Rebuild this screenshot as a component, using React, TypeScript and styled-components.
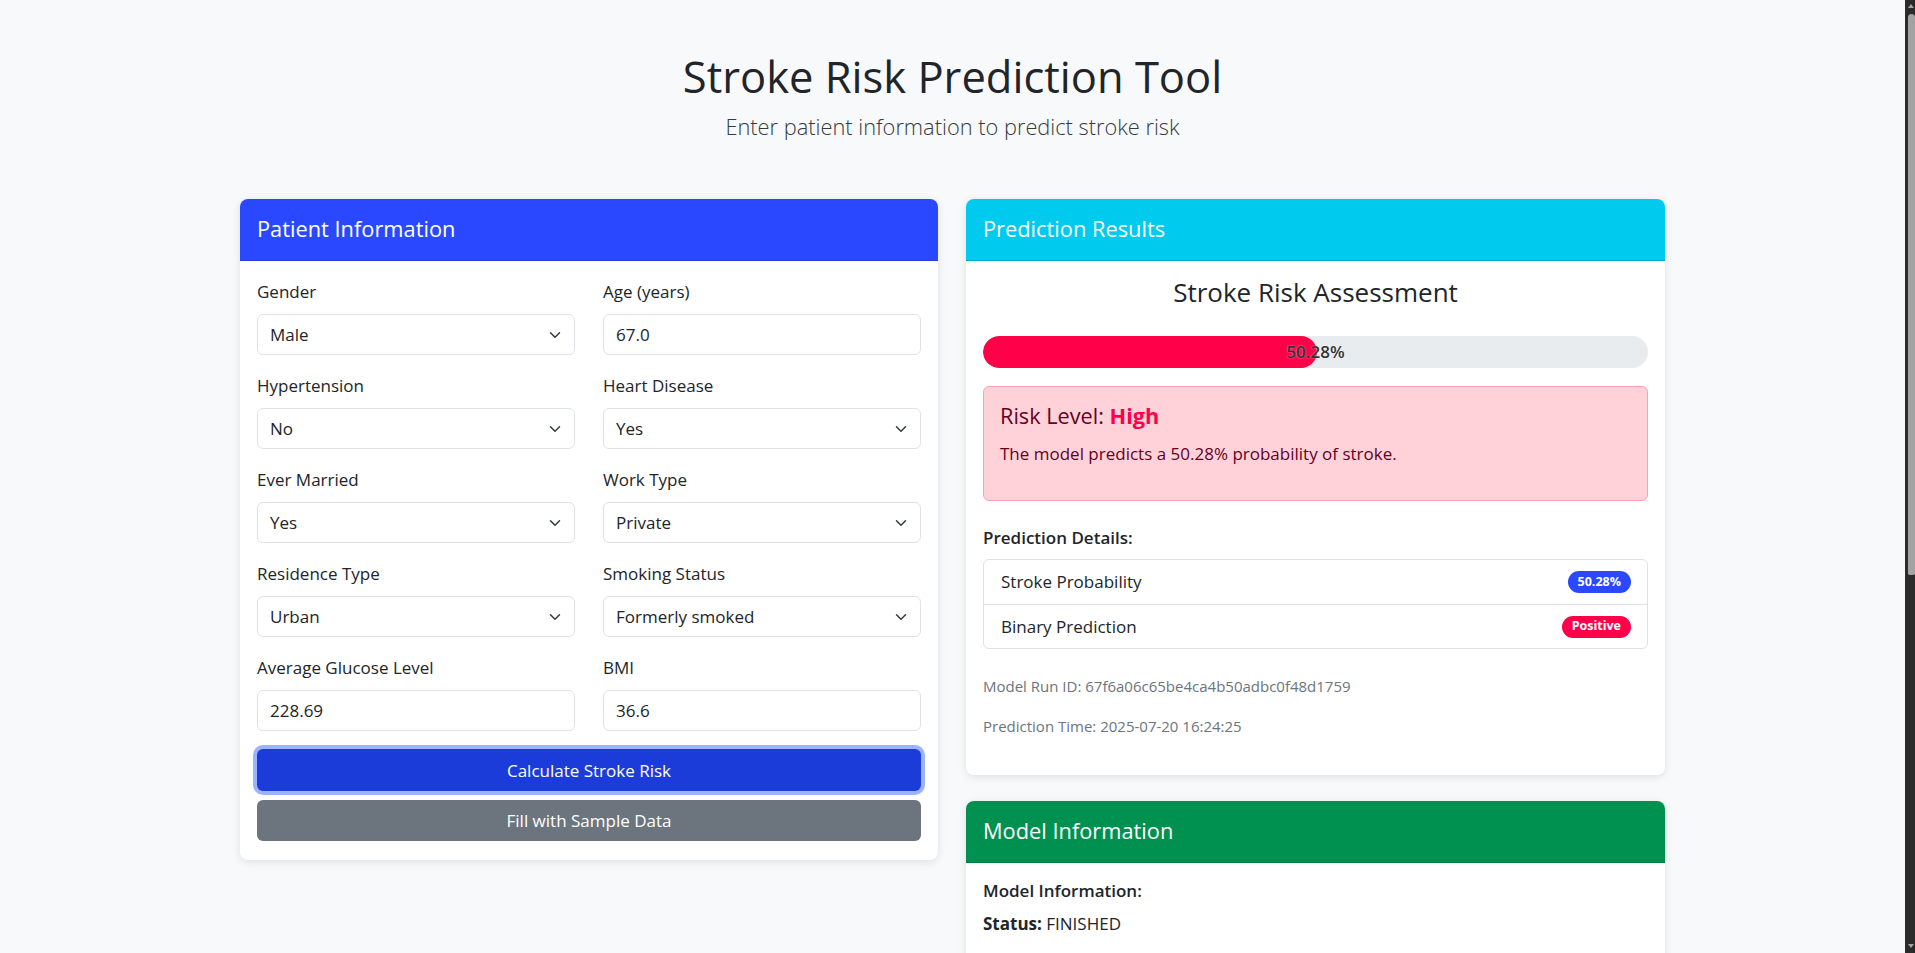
import React from "react";
import styled, { createGlobalStyle } from "styled-components";

const FONT = `"Open Sans", "Noto Sans", "Liberation Sans", sans-serif`;

const GlobalStyle = createGlobalStyle`
  html, body {
    margin: 0;
    padding: 0;
    background: #f8f9fa;
  }
  body {
    font-family: ${FONT};
    font-size: 17px;
    line-height: 1.5;
    color: #212529;
  }
  *, *::before, *::after { box-sizing: border-box; }
`;

const Page = styled.div`
  min-height: 1568px;
  padding: 43px 10px 40px 0;
`;

const Hero = styled.header`
  text-align: center;
  margin-bottom: 57px;
`;

const Title = styled.h1`
  margin: 0 0 2px;
  font-size: 43.5px;
  font-weight: 400;
  line-height: 67px;
  color: #212529;
`;

const Subtitle = styled.p`
  margin: 0;
  font-size: 21.8px;
  font-weight: 300;
  line-height: 30px;
  color: #343a40;
`;

const Layout = styled.main`
  width: 1425px;
  margin: 0 auto;
  display: grid;
  grid-template-columns: 698px 699px;
  column-gap: 28px;
  align-items: start;
`;

const Column = styled.div`
  display: flex;
  flex-direction: column;
  gap: 26px;
`;

const Card = styled.section`
  background: #fff;
  border-radius: 8px;
  overflow: hidden;
  box-shadow: 0 2px 8px rgba(0, 0, 0, 0.1);
`;

const CardHeader = styled.div<{ $bg: string }>`
  height: 62px;
  padding: 0 17px;
  display: flex;
  align-items: center;
  background: ${(p) => p.$bg};
  border-bottom: 1px solid rgba(0, 0, 0, 0.15);
`;

const CardTitle = styled.h4`
  margin: 0 0 1px;
  font-size: 21.8px;
  font-weight: 400;
  line-height: 1.2;
  color: #fff;
`;

const CardBody = styled.div<{ $pt?: number; $pb?: number }>`
  padding: ${(p) => p.$pt ?? 20}px 17px ${(p) => p.$pb ?? 19}px;
`;

const FormGrid = styled.div`
  display: grid;
  grid-template-columns: 1fr 1fr;
  column-gap: 28px;
  row-gap: 20px;
`;

const Field = styled.div`
  display: flex;
  flex-direction: column;
`;

const Label = styled.label`
  font-size: 17px;
  line-height: 22px;
  margin-bottom: 11px;
  color: #212529;
`;

const controlCss = `
  width: 100%;
  height: 41px;
  padding: 0 12px;
  font-family: ${FONT};
  font-size: 17px;
  color: #212529;
  background: #fff;
  border: 1px solid #dee2e6;
  border-radius: 6px;
  outline: none;
`;

const Input = styled.input`
  ${controlCss}
`;

const SelectWrap = styled.div`
  position: relative;
`;

const Select = styled.select`
  ${controlCss}
  appearance: none;
  -webkit-appearance: none;
  padding-right: 36px;
`;

const Chevron = styled.svg`
  position: absolute;
  right: 12px;
  top: 50%;
  width: 16px;
  height: 12px;
  margin-top: -6px;
  pointer-events: none;
`;

const Button = styled.button<{ $variant: "primary" | "secondary" }>`
  display: block;
  width: 100%;
  height: ${(p) => (p.$variant === "primary" ? "42px" : "41px")};
  border: 1px solid transparent;
  border-radius: 6px;
  font-family: ${FONT};
  font-size: 17px;
  color: #fff;
  cursor: pointer;
  background: ${(p) => (p.$variant === "primary" ? "#1c3cd9" : "#6c757d")};
  margin-top: ${(p) => (p.$variant === "primary" ? "18px" : "9px")};
  box-shadow: ${(p) =>
    p.$variant === "primary" ? "0 0 0 4px rgba(74, 118, 255, 0.55)" : "none"};
`;

const AssessTitle = styled.h4`
  margin: 0 0 29px;
  text-align: center;
  font-size: 26px;
  font-weight: 400;
  line-height: 29px;
`;

const Progress = styled.div`
  display: grid;
  height: 32px;
  border-radius: 16px;
  background: #e9ecef;
  overflow: hidden;
`;

const ProgressFill = styled.div`
  grid-area: 1 / 1;
  height: 100%;
  border-radius: 16px;
  background: #ff0049;
`;

const ProgressLabel = styled.span`
  grid-area: 1 / 1;
  align-self: center;
  justify-self: center;
  font-size: 17px;
  font-weight: 600;
  color: #333;
  text-shadow: 0 0 2px rgba(255, 255, 255, 0.6);
`;

const Alert = styled.div`
  margin-top: 18px;
  padding: 16px 16px 0;
  background: #ffd2da;
  border: 1px solid #ff9fb5;
  border-radius: 6px;
  color: #66001d;
`;

const AlertHeading = styled.h5`
  margin: 0 0 14px;
  font-size: 21.7px;
  font-weight: 400;
  line-height: 25px;
`;

const HighText = styled.strong`
  color: #ff0049;
  font-weight: 700;
`;

const AlertText = styled.p`
  margin: 0 0 34px;
  font-size: 17px;
  line-height: 24px;
`;

const SectionTitle = styled.h6`
  margin: 27px 0 11px;
  font-size: 17px;
  font-weight: 600;
  line-height: 20px;
`;

const ListGroup = styled.ul`
  margin: 0;
  padding: 0;
  list-style: none;
  border: 1px solid #dee2e6;
  border-radius: 6px;
`;

const ListItem = styled.li`
  display: flex;
  align-items: center;
  justify-content: space-between;
  height: 44px;
  padding: 0 16px 0 17px;
  font-size: 17px;
  & + & {
    border-top: 1px solid #dee2e6;
  }
`;

const Badge = styled.span<{ $bg: string }>`
  display: inline-flex;
  align-items: center;
  height: 22px;
  padding: 0 10px;
  border-radius: 11px;
  background: ${(p) => p.$bg};
  color: #fff;
  font-size: 12.5px;
  font-weight: 700;
`;

const Meta = styled.div`
  margin-top: 25px;
`;

const MetaText = styled.p`
  margin: 0 0 16px;
  font-size: 15px;
  line-height: 24px;
  color: #6c757d;
`;

const InfoTitle = styled.h6`
  margin: 0 0 11px;
  font-size: 17px;
  font-weight: 600;
  line-height: 20px;
`;

const InfoText = styled.p`
  margin: 0 0 16px;
  font-size: 17px;
  line-height: 24px;
`;

const Scrollbar = styled.div`
  position: fixed;
  top: 0;
  right: 0;
  width: 10px;
  height: 100vh;
  background: #2b2b2b;
  display: flex;
  flex-direction: column;
  align-items: flex-end;
`;

const ScrollArrow = styled.span<{ $dir: "up" | "down" }>`
  display: block;
  margin: ${(p) => (p.$dir === "up" ? "4px 0 6px" : "auto 0 5px")};
  margin-right: 1px;
  width: 0;
  height: 0;
  border-left: 3px solid transparent;
  border-right: 3px solid transparent;
  ${(p) =>
    p.$dir === "up"
      ? "border-bottom: 4px solid #a3a3a3;"
      : "border-top: 4px solid #a3a3a3;"}
`;

const ScrollThumb = styled.span`
  display: block;
  width: 7px;
  height: 561px;
  background: #a3a3a3;
  border-radius: 4px 4px 2px 2px;
`;

const ChevronIcon = () => (
  <Chevron viewBox="0 0 16 16" fill="none">
    <path
      d="m2 5 6 6 6-6"
      stroke="#343a40"
      strokeWidth="2"
      strokeLinecap="round"
      strokeLinejoin="round"
    />
  </Chevron>
);

type SelectFieldProps = { label: string; value: string; options: string[] };

const SelectField = ({ label, value, options }: SelectFieldProps) => (
  <Field>
    <Label>{label}</Label>
    <SelectWrap>
      <Select defaultValue={value}>
        {options.map((o) => (
          <option key={o}>{o}</option>
        ))}
      </Select>
      <ChevronIcon />
    </SelectWrap>
  </Field>
);

const InputField = ({ label, value }: { label: string; value: string }) => (
  <Field>
    <Label>{label}</Label>
    <Input defaultValue={value} />
  </Field>
);

export default function App() {
  const probability = 50.28;
  return (
    <>
      <GlobalStyle />
      <Page>
        <Hero>
          <Title>Stroke Risk Prediction Tool</Title>
          <Subtitle>Enter patient information to predict stroke risk</Subtitle>
        </Hero>
        <Layout>
          <Card>
            <CardHeader $bg="#2a48ff">
              <CardTitle>Patient Information</CardTitle>
            </CardHeader>
            <CardBody>
              <FormGrid>
                <SelectField label="Gender" value="Male" options={["Male", "Female", "Other"]} />
                <InputField label="Age (years)" value="67.0" />
                <SelectField label="Hypertension" value="No" options={["No", "Yes"]} />
                <SelectField label="Heart Disease" value="Yes" options={["No", "Yes"]} />
                <SelectField label="Ever Married" value="Yes" options={["No", "Yes"]} />
                <SelectField
                  label="Work Type"
                  value="Private"
                  options={["Private", "Self-employed", "Govt job", "Children", "Never worked"]}
                />
                <SelectField label="Residence Type" value="Urban" options={["Urban", "Rural"]} />
                <SelectField
                  label="Smoking Status"
                  value="Formerly smoked"
                  options={["Formerly smoked", "Never smoked", "Smokes", "Unknown"]}
                />
                <InputField label="Average Glucose Level" value="228.69" />
                <InputField label="BMI" value="36.6" />
              </FormGrid>
              <Button $variant="primary">Calculate Stroke Risk</Button>
              <Button $variant="secondary">Fill with Sample Data</Button>
            </CardBody>
          </Card>
          <Column>
            <Card>
              <CardHeader $bg="#00cbef">
                <CardTitle>Prediction Results</CardTitle>
              </CardHeader>
              <CardBody $pt={17} $pb={21}>
                <AssessTitle>Stroke Risk Assessment</AssessTitle>
                <Progress>
                  <ProgressFill style={{ width: `${probability}%` }} />
                  <ProgressLabel>{probability}%</ProgressLabel>
                </Progress>
                <Alert>
                  <AlertHeading>
                    Risk Level: <HighText>High</HighText>
                  </AlertHeading>
                  <AlertText>The model predicts a {probability}% probability of stroke.</AlertText>
                </Alert>
                <SectionTitle>Prediction Details:</SectionTitle>
                <ListGroup>
                  <ListItem>
                    Stroke Probability
                    <Badge $bg="#2a48ff">{probability}%</Badge>
                  </ListItem>
                  <ListItem>
                    Binary Prediction
                    <Badge $bg="#ff0049">Positive</Badge>
                  </ListItem>
                </ListGroup>
                <Meta>
                  <MetaText>Model Run ID: 67f6a06c65be4ca4b50adbc0f48d1759</MetaText>
                  <MetaText>Prediction Time: 2025-07-20 16:24:25</MetaText>
                </Meta>
              </CardBody>
            </Card>
            <Card>
              <CardHeader $bg="#009150">
                <CardTitle>Model Information</CardTitle>
              </CardHeader>
              <CardBody $pt={18}>
                <InfoTitle>Model Information:</InfoTitle>
                <InfoText>
                  <strong>Status:</strong> FINISHED
                </InfoText>
              </CardBody>
            </Card>
          </Column>
        </Layout>
      </Page>
      <Scrollbar aria-hidden="true">
        <ScrollArrow $dir="up" />
        <ScrollThumb />
        <ScrollArrow $dir="down" />
      </Scrollbar>
    </>
  );
}
